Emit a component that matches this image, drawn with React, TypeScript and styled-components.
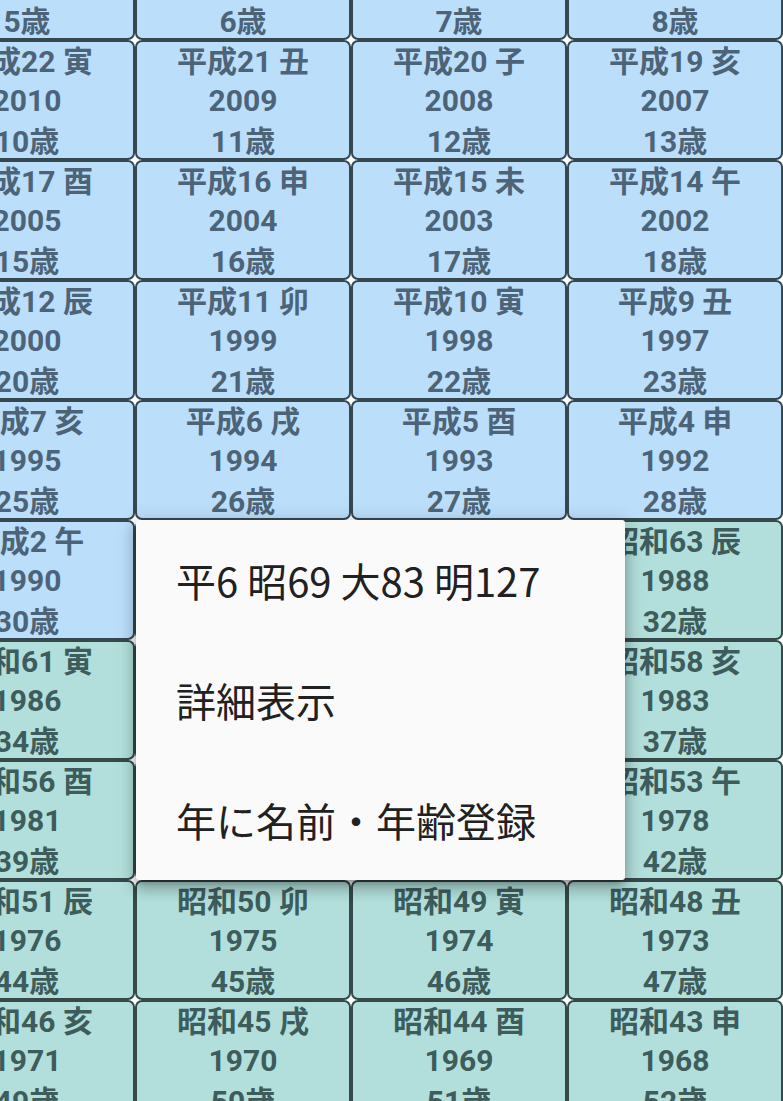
import React from 'react';
import styled, { createGlobalStyle } from 'styled-components';

type Era = 'heisei' | 'showa';

type YearCell = {
  year: number;
  era: Era;
};

const CURRENT_YEAR = 2020;
const ZODIAC = ['子', '丑', '寅', '卯', '辰', '巳', '午', '未', '申', '酉', '戌', '亥'];

const GlobalStyle = createGlobalStyle`
  html, body {
    margin: 0;
    padding: 0;
    background: #ffffff;
  }
  * {
    box-sizing: border-box;
  }
`;

const Screen = styled.div`
  position: relative;
  width: 783px;
  height: 1101px;
  overflow: hidden;
  background: #ffffff;
`;

const Grid = styled.div`
  display: grid;
  grid-template-columns: repeat(4, 216px);
  grid-auto-rows: 120px;
  margin: -80px 0 0 -81px;
`;

const Cell = styled.div<{ $era: Era }>`
  display: flex;
  flex-direction: column;
  align-items: center;
  border: 2px solid ${(p) => (p.$era === 'heisei' ? '#37474f' : '#364848')};
  border-radius: 7px;
  background: ${(p) => (p.$era === 'heisei' ? '#bbdefb' : '#b2dfdb')};
  color: ${(p) => (p.$era === 'heisei' ? '#4d6478' : '#3e5c5c')};
  font-family: Roboto, 'Noto Sans CJK JP', sans-serif;
  font-weight: 700;
  font-size: 30px;
  overflow: hidden;
`;

const Line = styled.div<{ $height: number }>`
  white-space: nowrap;
  line-height: ${(p) => p.$height}px;
`;

const Menu = styled.div`
  position: absolute;
  left: 136px;
  top: 520px;
  width: 489px;
  display: flex;
  flex-direction: column;
  background: #fafafa;
  border-radius: 3px;
  box-shadow: 0 5px 6px -3px rgba(0, 0, 0, 0.24), 0 9px 14px 1px rgba(0, 0, 0, 0.18),
    0 3px 18px 3px rgba(0, 0, 0, 0.15);
`;

const MenuItem = styled.div`
  height: 120px;
  display: flex;
  align-items: center;
  padding: 0 40px;
  font-family: 'Noto Sans CJK JP', sans-serif;
  font-size: 40px;
  font-weight: 400;
  color: #212121;
  white-space: nowrap;
`;

const rows: YearCell[][] = [
  [2015, 2014, 2013, 2012],
  [2010, 2009, 2008, 2007],
  [2005, 2004, 2003, 2002],
  [2000, 1999, 1998, 1997],
  [1995, 1994, 1993, 1992],
  [1990, 1989, -1989, 1988],
  [1986, 1985, 1984, 1983],
  [1981, 1980, 1979, 1978],
  [1976, 1975, 1974, 1973],
  [1971, 1970, 1969, 1968],
].map((row) =>
  row.map((y) => {
    // negative marks the 昭和64 entry of 1989
    const year = Math.abs(y);
    const era: Era = y > 0 && year >= 1989 ? 'heisei' : 'showa';
    return { year, era };
  }),
);

const eraLabel = ({ year, era }: YearCell) => {
  if (era === 'heisei') {
    const n = year - 1988;
    return `平成${n === 1 ? '元' : n}`;
  }
  return `昭和${year - 1925}`;
};

const zodiacOf = (year: number) => ZODIAC[(((year - 2008) % 12) + 12) % 12];

const YearBox = ({ cell }: { cell: YearCell }) => (
  <Cell $era={cell.era}>
    <Line $height={40}>
      {eraLabel(cell)} {zodiacOf(cell.year)}
    </Line>
    <Line $height={37}>{cell.year}</Line>
    <Line $height={45}>{CURRENT_YEAR - cell.year}歳</Line>
  </Cell>
);

const App = () => (
  <>
    <GlobalStyle />
    <Screen>
      <Grid>
        {rows.map((row, r) => row.map((cell, c) => <YearBox key={`${r}-${c}`} cell={cell} />))}
      </Grid>
      <Menu>
        <MenuItem>平6 昭69 大83 明127</MenuItem>
        <MenuItem>詳細表示</MenuItem>
        <MenuItem>年に名前・年齢登録</MenuItem>
      </Menu>
    </Screen>
  </>
);

export default App;
